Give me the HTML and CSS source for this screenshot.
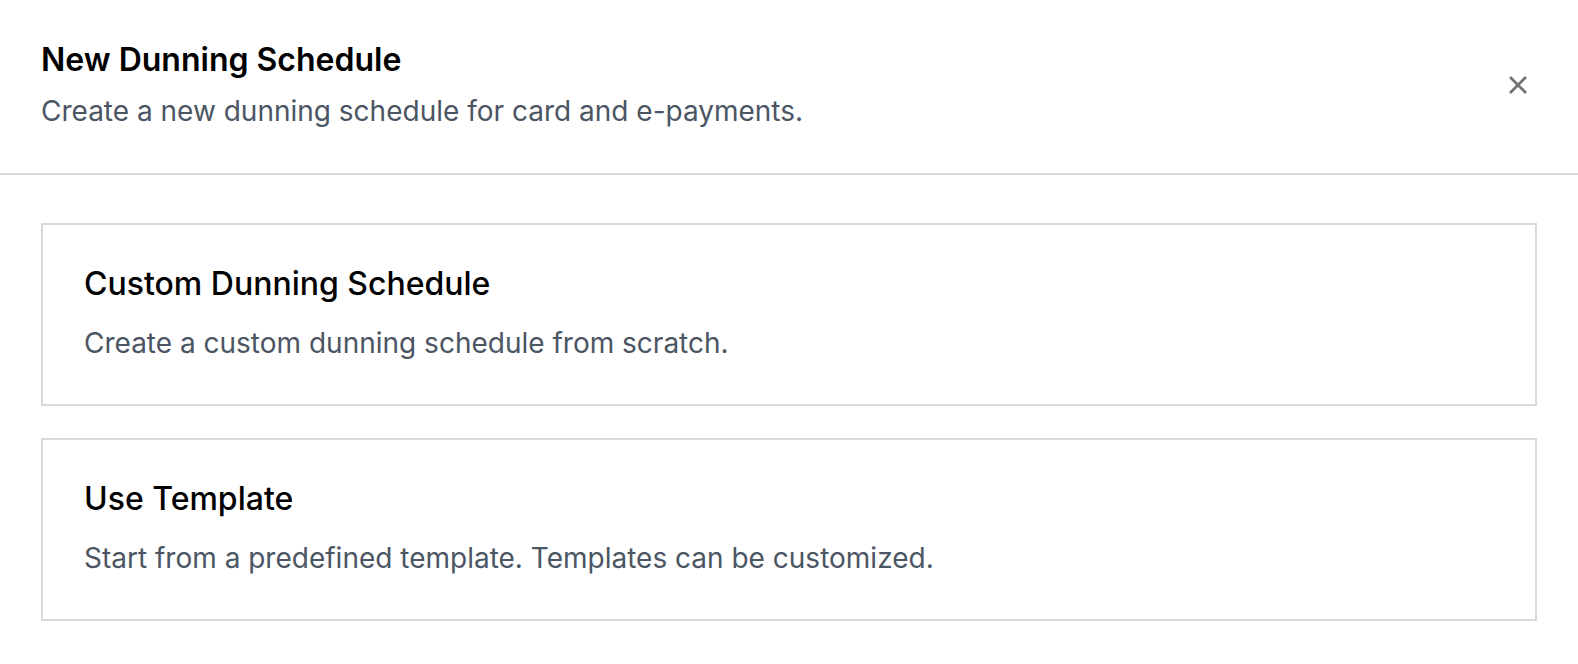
FILE: index.html
```html
<!DOCTYPE html>
<html lang="en">
<head>
<meta charset="utf-8">
<title>New Dunning Schedule</title>
<link rel="stylesheet" href="styles.css">
</head>
<body>
<div class="dialog">
  <header class="dialog-header">
    <div class="header-text">
      <h1 class="dialog-title">New Dunning Schedule</h1>
      <p class="dialog-subtitle">Create a new dunning schedule for card and e-payments.</p>
    </div>
    <button class="close-btn" aria-label="Close">
      <svg width="18" height="18" viewBox="0 0 18 18" aria-hidden="true">
        <path d="M2 2 L16 16 M16 2 L2 16" stroke="#737373" stroke-width="2.8" stroke-linecap="square" fill="none"/>
      </svg>
    </button>
  </header>
  <main class="dialog-body">
    <div class="option-card">
      <h2 class="option-title">Custom Dunning Schedule</h2>
      <p class="option-desc">Create a custom dunning schedule from scratch.</p>
    </div>
    <div class="option-card">
      <h2 class="option-title">Use Template</h2>
      <p class="option-desc">Start from a predefined template. Templates can be customized.</p>
    </div>
  </main>
</div>
</body>
</html>
```

FILE: styles.css
```css
* {
  box-sizing: border-box;
}

html, body {
  margin: 0;
  padding: 0;
  background: #ffffff;
}

body {
  font-family: Inter, "Noto Sans", sans-serif;
  color: #000000;
}

.dialog {
  display: flex;
  flex-direction: column;
}

.dialog-header {
  display: flex;
  align-items: center;
  justify-content: space-between;
  padding: 40px 51px 44px 41px;
  border-bottom: 2px solid #d9d9d9;
}

.header-text {
  display: flex;
  flex-direction: column;
  gap: 13px;
}

.dialog-title {
  margin: 0;
  font-size: 32px;
  line-height: 40px;
  font-weight: 600;
  color: #000000;
}

.dialog-subtitle {
  margin: 0;
  font-size: 28px;
  line-height: 36px;
  font-weight: 400;
  color: #4b5563;
}

.close-btn {
  display: flex;
  align-items: center;
  justify-content: center;
  width: 18px;
  height: 18px;
  padding: 0;
  border: 0;
  background: none;
  cursor: pointer;
}

.dialog-body {
  display: flex;
  flex-direction: column;
  gap: 32px;
  padding: 48px 41px 0 41px;
}

.option-card {
  display: flex;
  flex-direction: column;
  gap: 21px;
  padding: 39px 41px 43px 41px;
  border: 2px solid #d9d9d9;
  background: #ffffff;
}

.option-title {
  margin: 0;
  font-size: 32px;
  line-height: 40px;
  font-weight: 500;
  color: #000000;
}

.option-desc {
  margin: 0;
  font-size: 28px;
  line-height: 36px;
  font-weight: 400;
  color: #4b5563;
}
```
